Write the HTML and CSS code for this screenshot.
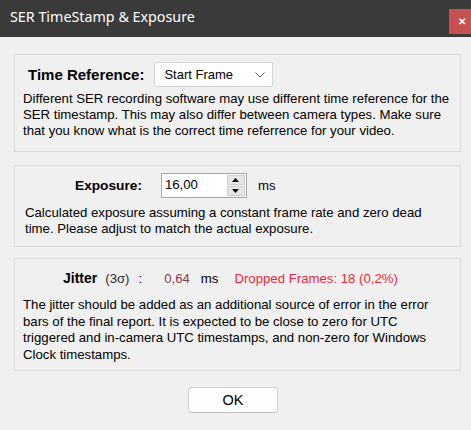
FILE: index.html
```html
<!DOCTYPE html>
<html lang="en">
<head>
  <meta charset="UTF-8">
  <title>SER TimeStamp &amp; Exposure</title>
  <link rel="stylesheet" href="styles.css">
</head>
<body>
  <!-- Title bar -->
  <div class="titlebar">
    <span class="title">SER TimeStamp &amp; Exposure</span>
    <span class="close">&#x2715;</span>
  </div>

  <div class="content">
    <!-- Time reference -->
    <div class="group group-time">
      <div class="row row-time">
        <span class="label">Time Reference:</span>
        <div class="combo">
          <span>Start Frame</span>
          <svg width="10" height="6" viewBox="0 0 10 6"><path d="M0.5 0.5 L5 5 L9.5 0.5" fill="none" stroke="#606060" stroke-width="1"/></svg>
        </div>
      </div>
      <p class="note">Different SER recording software may use different time reference for the SER timestamp. This may also differ between camera types. Make sure that you know what is the correct time referrence for your video.</p>
    </div>

    <!-- Exposure -->
    <div class="group group-exp">
      <div class="row row-exp">
        <span class="label">Exposure:</span>
        <div class="numeric">
          <span class="num-value">16,00</span>
          <div class="spin">
            <span class="spin-btn"><svg width="7" height="4" viewBox="0 0 7 4"><path d="M3.5 0 L7 4 L0 4 Z" fill="#000"/></svg></span>
            <span class="spin-btn"><svg width="7" height="4" viewBox="0 0 7 4"><path d="M0 0 L7 0 L3.5 4 Z" fill="#000"/></svg></span>
          </div>
        </div>
        <span class="unit">ms</span>
      </div>
      <p class="note note-exp">Calculated exposure assuming a constant frame rate and zero dead time. Please adjust to match the actual exposure.</p>
    </div>

    <!-- Jitter -->
    <div class="group group-jitter">
      <div class="row row-jitter">
        <span class="label">Jitter</span>
        <span class="sigma">(3σ)</span>
        <span class="colon">:</span>
        <span class="jitter-value">0,64</span>
        <span class="unit-j">ms</span>
        <span class="dropped">Dropped Frames: 18 (0,2%)</span>
      </div>
      <p class="note note-jitter">The jitter should be added as an additional source of error in the error bars of the final report. It is expected to be close to zero for UTC triggered and in-camera UTC timestamps, and non-zero for Windows Clock timestamps.</p>
    </div>

    <div class="buttons">
      <button class="ok">OK</button>
    </div>
  </div>
</body>
</html>
```

FILE: styles.css
```css
* {
  margin: 0;
  padding: 0;
  box-sizing: border-box;
}
body {
  width: 471px;
  height: 430px;
  overflow: hidden;
  background: #f0f0f0;
  font-family: 'Liberation Sans', Arial, sans-serif;
  font-size: 13.2px;
  color: #000;
}
/* Title bar */
.titlebar {
  height: 37px;
  background: #3a3a3a;
  display: flex;
  justify-content: space-between;
  align-items: flex-start;
}
.title {
  font-family: 'Noto Sans', 'Open Sans', sans-serif;
  font-size: 14.3px;
  color: #fff;
  padding: 7px 0 0 10px;
}
.close {
  margin-top: 9px;
  width: 22px;
  height: 25px;
  background: #c75050;
  color: #fff;
  font-size: 10px;
  font-weight: bold;
  display: flex;
  align-items: center;
  justify-content: center;
  padding-left: 4px;
}
/* Content */
.content {
  padding: 17px 10px 0 14px;
}
.group {
  border: 1px solid #dadada;
  padding: 7px 8px 12px 8px;
  margin-bottom: 13px;
}
.row {
  display: flex;
  align-items: center;
  height: 25px;
}
.label {
  font-weight: bold;
}
.note {
  width: 428px;
  line-height: 16px;
  margin-top: 4px;
}
/* Time reference */
.row-time .label {
  font-size: 15px;
  margin-left: 5px;
  margin-right: 10px;
}
.combo {
  width: 119px;
  height: 25px;
  background: #fff;
  border: 1px solid #d4d4d4;
  border-radius: 2px;
  display: flex;
  align-items: center;
  justify-content: space-between;
  padding: 0 7px 0 9px;
  font-size: 13px;
}
/* Exposure */
.group-exp {
  padding-bottom: 9px;
  margin-bottom: 11px;
}
.row-exp .label {
  font-size: 13.7px;
  margin-left: 52px;
  margin-right: 19px;
}
.numeric {
  width: 86px;
  height: 25px;
  background: #fff;
  border: 1px solid #a8a8a8;
  display: flex;
  justify-content: space-between;
  padding: 1px 1px 1px 3px;
}
.num-value {
  line-height: 20px;
}
.spin {
  width: 18px;
  display: flex;
  flex-direction: column;
  gap: 1px;
}
.spin-btn {
  flex: 1;
  background: #e5e5e5;
  border: 1px solid #cfcfcf;
  display: flex;
  align-items: center;
  justify-content: center;
}
.unit {
  margin-left: 11px;
}
.note-exp {
  width: 424px;
  margin-left: 2px;
  margin-top: 7px;
}
/* Jitter */
.group-jitter {
  padding-bottom: 7px;
  margin-bottom: 12px;
}
.row-jitter {
  height: 22px;
  margin-top: 1px;
}
.row-jitter .label {
  margin-left: 40px;
  font-size: 14px;
}
.sigma {
  margin-left: 8px;
  color: #303030;
}
.colon {
  margin-left: 9px;
}
.jitter-value {
  margin-left: 22px;
  color: #8b3a4a;
}
.unit-j {
  margin-left: 11px;
}
.dropped {
  margin-left: 16px;
  color: #f0283c;
}
.note-jitter {
  margin-top: 8px;
  line-height: 16.5px;
}
/* Button */
.buttons {
  display: flex;
  justify-content: center;
  padding-top: 4px;
}
.ok {
  width: 90px;
  height: 26px;
  background: #fdfdfd;
  border: 1px solid #d0d0d0;
  border-bottom-color: #bdbdbd;
  border-radius: 4px;
  font-family: 'Liberation Sans', Arial, sans-serif;
  font-size: 14.5px;
  color: #000;
  margin-right: 9px;
}
```
